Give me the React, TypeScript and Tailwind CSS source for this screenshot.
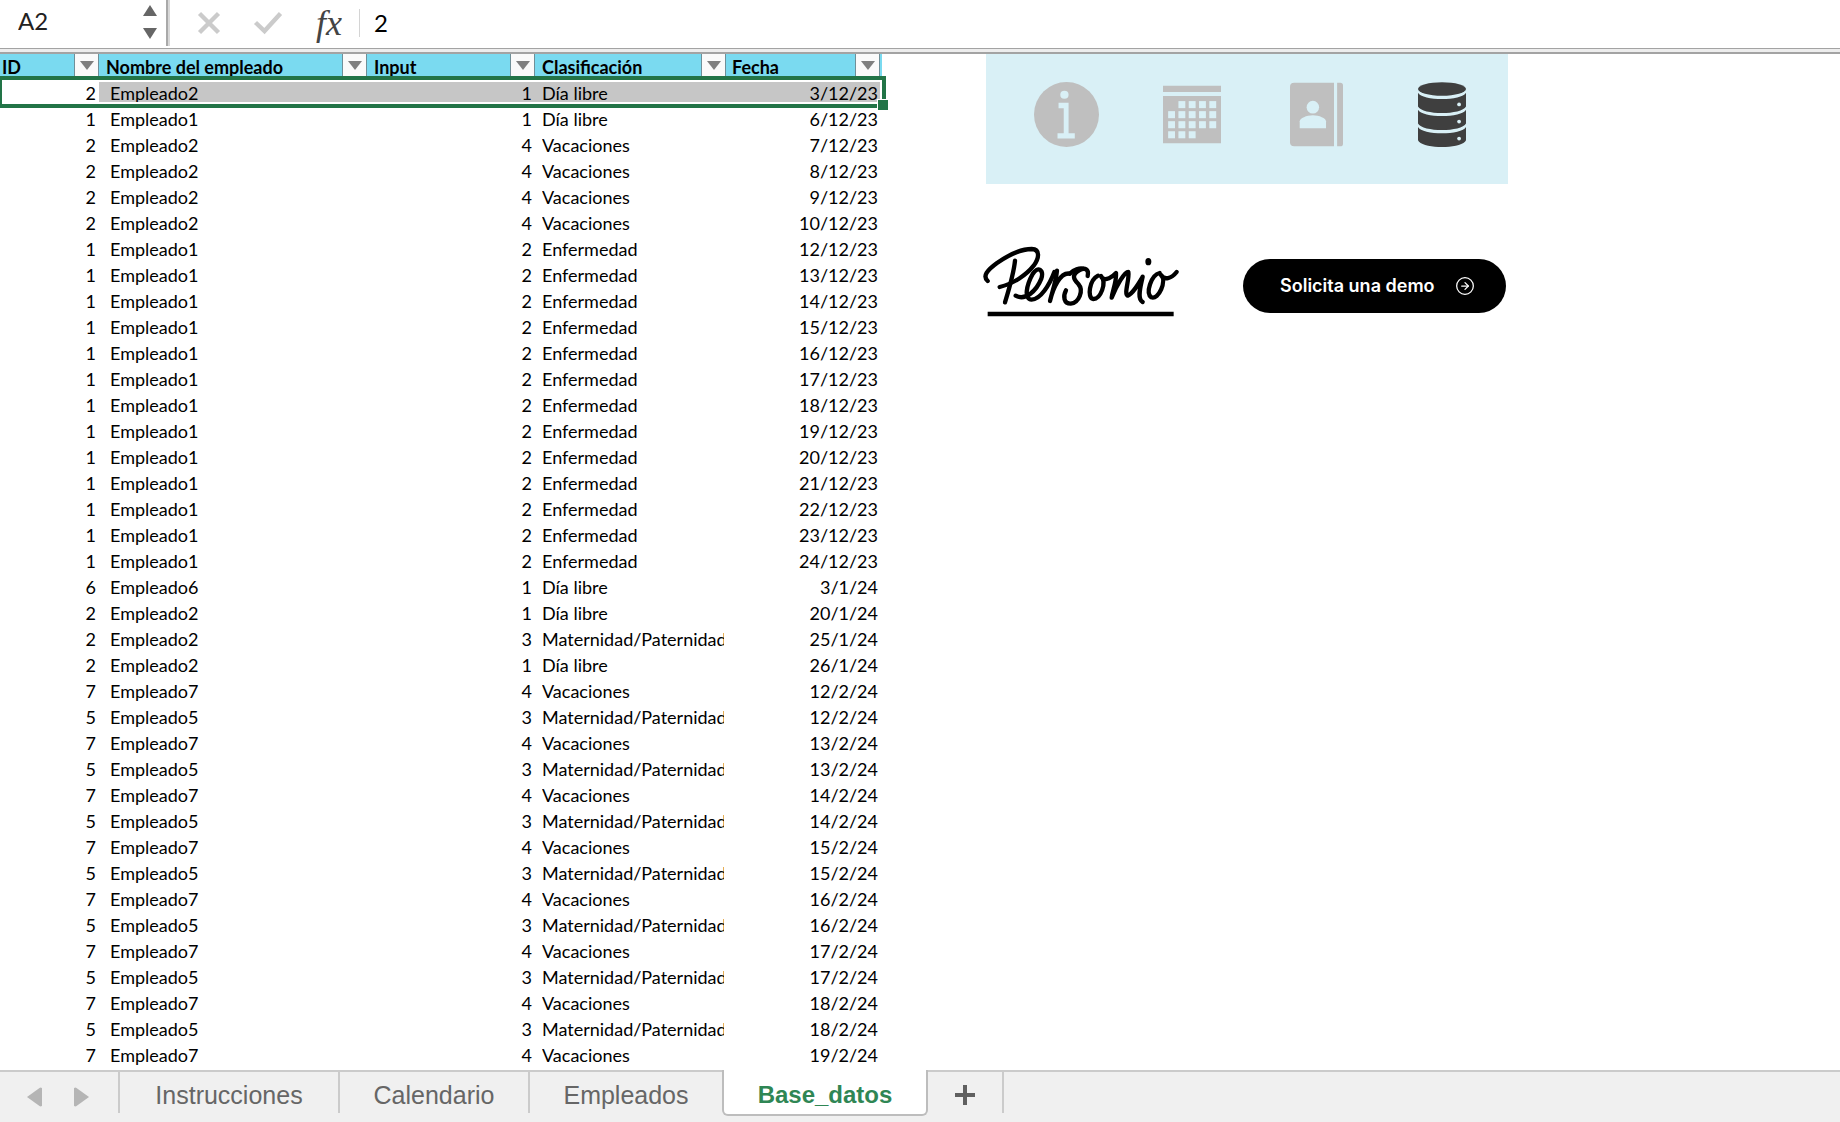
import { CircleArrowRight } from "lucide-react";

type Row = [id: number, input: number, date: string];

const KINDS: Record<number, string> = {
  1: "Día libre",
  2: "Enfermedad",
  3: "Maternidad/Paternidad",
  4: "Vacaciones",
};

const ROWS: Row[] = [
  [2, 1, "3/12/23"],
  [1, 1, "6/12/23"],
  [2, 4, "7/12/23"],
  [2, 4, "8/12/23"],
  [2, 4, "9/12/23"],
  [2, 4, "10/12/23"],
  [1, 2, "12/12/23"],
  [1, 2, "13/12/23"],
  [1, 2, "14/12/23"],
  [1, 2, "15/12/23"],
  [1, 2, "16/12/23"],
  [1, 2, "17/12/23"],
  [1, 2, "18/12/23"],
  [1, 2, "19/12/23"],
  [1, 2, "20/12/23"],
  [1, 2, "21/12/23"],
  [1, 2, "22/12/23"],
  [1, 2, "23/12/23"],
  [1, 2, "24/12/23"],
  [6, 1, "3/1/24"],
  [2, 1, "20/1/24"],
  [2, 3, "25/1/24"],
  [2, 1, "26/1/24"],
  [7, 4, "12/2/24"],
  [5, 3, "12/2/24"],
  [7, 4, "13/2/24"],
  [5, 3, "13/2/24"],
  [7, 4, "14/2/24"],
  [5, 3, "14/2/24"],
  [7, 4, "15/2/24"],
  [5, 3, "15/2/24"],
  [7, 4, "16/2/24"],
  [5, 3, "16/2/24"],
  [7, 4, "17/2/24"],
  [5, 3, "17/2/24"],
  [7, 4, "18/2/24"],
  [5, 3, "18/2/24"],
  [7, 4, "19/2/24"],
];

const COLUMNS = [
  { name: "ID", width: "w-[99px]", pad: "pl-[2px]" },
  { name: "Nombre del empleado", width: "w-[268px]", pad: "pl-[7px]" },
  { name: "Input", width: "w-[168px]", pad: "pl-[7px]" },
  { name: "Clasificación", width: "w-[191px]", pad: "pl-[7px]" },
  { name: "Fecha", width: "w-[156px]", pad: "pl-[6px] pr-[2px]" },
];

function FormulaBar() {
  return (
    <header className="flex h-12 shrink-0 items-center bg-white">
      <div className="flex h-[46px] w-[170px] items-center justify-between self-start border-r-2 border-[#d8d8d8] pl-[18px]">
        <input
          aria-label="Cuadro de nombres"
          defaultValue="A2"
          className="mb-1 w-24 bg-transparent text-2xl leading-7 text-[#222] outline-none"
        />
        <div className="flex h-full items-center border-r-2 border-[#a9a9a9] pr-[9px]">
          <div className="flex flex-col gap-3 pb-[2px]">
            <button aria-label="Anterior">
              <svg viewBox="0 0 14 11" className="block h-[11px] w-[14px] fill-[#666]">
                <path d="M7 0 14 11H0z" />
              </svg>
            </button>
            <button aria-label="Siguiente">
              <svg viewBox="0 0 14 11" className="block h-[11px] w-[14px] fill-[#666]">
                <path d="M0 0H14L7 11z" />
              </svg>
            </button>
          </div>
        </div>
      </div>
      <button aria-label="Cancelar" className="mb-[2px] ml-[27px]">
        <svg viewBox="0 0 24 24" className="block size-6 fill-none stroke-[#cbcbcb]" strokeWidth="4.4">
          <path d="M2.5 2.5 21.5 21.5M21.5 2.5 2.5 21.5" />
        </svg>
      </button>
      <button aria-label="Aceptar" className="mb-[2px] ml-8">
        <svg viewBox="0 0 30 24" className="block h-6 w-[30px] fill-none stroke-[#cbcbcb]" strokeWidth="4.4">
          <path d="M2.5 11.5 11.5 20 27.5 2.5" />
        </svg>
      </button>
      <button
        aria-label="Insertar función"
        className="mb-[2px] ml-7 w-9 font-['Liberation_Serif',serif] text-4xl leading-9 text-[#444] italic"
      >
        fx
      </button>
      <div className="mb-[2px] ml-3 h-7 w-px bg-[#d4d4d4]" />
      <input
        aria-label="Barra de fórmulas"
        defaultValue="2"
        className="mb-[2px] ml-[14px] min-w-0 flex-1 bg-transparent text-2xl leading-7 text-black outline-none"
      />
    </header>
  );
}

function DataTable() {
  return (
    <div className="relative w-[882px] shrink-0">
      <table className="w-full table-fixed border-separate border-spacing-0 text-lg leading-5 text-black">
        <thead>
          <tr>
            {COLUMNS.map((col) => (
              <th key={col.name} className={`${col.width} h-[26px] bg-[#7adaf0] p-0 text-left font-bold`}>
                <div className={`${col.pad} flex h-[26px] items-center justify-between whitespace-nowrap`}>
                  {col.name}
                  <button
                    aria-label={`Filtrar ${col.name}`}
                    className="flex h-full w-[25px] items-start justify-center border-x border-[#6f8f98] bg-[#fafafa] pt-[7px]"
                  >
                    <svg viewBox="0 0 14 9" className="block h-[9px] w-[14px] fill-[#7f7f7f]">
                      <path d="M0 0H14L7 9z" />
                    </svg>
                  </button>
                </div>
              </th>
            ))}
          </tr>
        </thead>
        <tbody>
          {ROWS.map(([id, input, date], i) => {
            const fill = i === 0 ? "bg-[#c6c6c6]" : "";
            return (
              <tr key={i} className="h-[26px]">
                <td className="p-0 pr-[3px] text-right">{id}</td>
                <td className={`${fill} p-0 pl-[11px]`}>Empleado{id}</td>
                <td className={`${fill} p-0 pr-[3px] text-right`}>{input}</td>
                <td className={`${fill} p-0 pl-[7px]`}>
                  <div className="mr-[2px] overflow-hidden whitespace-nowrap">{KINDS[input]}</div>
                </td>
                <td className={`${fill} p-0 pr-1 text-right`}>{date}</td>
              </tr>
            );
          })}
        </tbody>
      </table>

      {/* selected range and its fill handle */}
      <div className="pointer-events-none absolute top-[22px] left-0 h-8 w-[886px] border-4 border-l-2 border-[#227447] inset-ring-2 inset-ring-white">
        <div className="absolute -right-[7px] -bottom-[7px] size-3 border border-white bg-[#227447]" />
      </div>
    </div>
  );
}

function InfoIcon() {
  return (
    <svg viewBox="158 96 188 194" preserveAspectRatio="none" className="size-[65px]">
      <ellipse cx="252" cy="193" rx="94" ry="97" fill="#bfbfbf" />
      <g fill="#d9f0f6">
        <circle cx="246" cy="134" r="12" />
        <path d="M229 158H258V249H276V265H226V249H244V174H229z" />
      </g>
    </svg>
  );
}

function CalendarIcon() {
  const days = [
    [1, 2, 3, 4],
    [0, 1, 2, 3, 4],
    [0, 1, 2, 3, 4],
    [0, 1, 2],
  ];
  return (
    <svg viewBox="528 96 169 194" preserveAspectRatio="none" className="h-[65px] w-[58px]">
      <path d="M528 107H697V126H528zM528 138H697V279H528z" fill="#bfbfbf" />
      {days.map((cols, r) =>
        cols.map((c) => (
          <rect key={`${r}-${c}`} x={543 + c * 30} y={153 + r * 30} width="20" height="21" fill="#d9f0f6" />
        ))
      )}
    </svg>
  );
}

function ContactsIcon() {
  return (
    <svg viewBox="898 96 153 194" preserveAspectRatio="none" className="h-[65px] w-[53px]">
      <path d="M910 98H1025V288H910Q898 288 898 276V110Q898 98 910 98z" fill="#bfbfbf" />
      <path d="M1034 98H1043Q1051 98 1051 106V280Q1051 288 1043 288H1034z" fill="#bfbfbf" />
      <ellipse cx="964" cy="171" rx="18" ry="19" fill="#d9f0f6" />
      <path d="M926 234V213C926 204 946 195 964 195S1002 204 1002 213V234z" fill="#d9f0f6" />
    </svg>
  );
}

function DatabaseIcon() {
  return (
    <svg viewBox="1269 96 139 194" preserveAspectRatio="none" className="h-[65px] w-12">
      <g fill="#3f3f3f">
        <ellipse cx="1338.5" cy="117" rx="69.5" ry="20" />
        <path d="M1269 128C1281 153 1396 153 1408 128V169C1396 195 1281 195 1269 169z" />
        <path d="M1269 179C1281 204 1396 204 1408 179V220C1396 246 1281 246 1269 220z" />
        <path d="M1269 230C1281 255 1396 255 1408 230V270C1396 297 1281 297 1269 270z" />
      </g>
      <g fill="#d9f0f6">
        <circle cx="1388" cy="163" r="5.5" />
        <circle cx="1388" cy="214" r="5.5" />
        <circle cx="1388" cy="265" r="5.5" />
      </g>
    </svg>
  );
}

function PersonioLogo() {
  return (
    <svg
      viewBox="40 48 591 213"
      className="-ml-[3px] h-[71px] w-[197px]"
      fill="none"
      stroke="#000"
      strokeWidth="13"
      strokeLinecap="round"
      strokeLinejoin="round"
      role="img"
      aria-label="Personio"
    >
      <path d="M54 153C38 138 52 121 82 99C118 74 158 57 186 57C212 58 209 84 192 107C170 135 130 162 90 171" />
      <path d="M136 92C132 132 119 174 106 217" />
      <path d="M138 197C166 213 200 184 215 146C223 120 205 106 189 132C170 166 162 208 186 209C212 208 239 166 254 126" />
      <path d="M262 122C259 154 248 184 241 213C250 174 272 126 300 131" />
      <path d="M354 138C359 117 345 112 330 120C304 134 312 148 326 162C343 182 328 218 303 221C283 221 279 200 289 181" />
      <path d="M300 131C312 118 330 114 340 116" />
      <path d="M385 137C359 150 352 203 370 207C393 208 412 158 394 138C400 154 420 148 439 129C441 155 429 180 426 203C440 168 464 126 476 126C480 148 462 192 474 197C490 190 505 164 519 140C514 166 500 206 519 216" />
      <path d="M570 129C544 135 527 190 545 202C567 210 592 153 574 135C584 151 604 147 621 126" />
      <ellipse cx="536" cy="95" rx="9" ry="11" fill="#000" stroke="none" />
      <path d="M54 252H612" strokeWidth="14" strokeLinecap="butt" />
    </svg>
  );
}

function SidePanel() {
  return (
    <aside className="ml-[104px] w-[522px] shrink-0">
      <nav className="grid h-[130px] grid-cols-4 items-start justify-items-center bg-[#d9f0f6] pt-7 pr-1 pl-[18px]">
        <a href="#instrucciones" aria-label="Instrucciones">
          <InfoIcon />
        </a>
        <a href="#calendario" aria-label="Calendario">
          <CalendarIcon />
        </a>
        <a href="#empleados" aria-label="Empleados">
          <ContactsIcon />
        </a>
        <a href="#base-datos" aria-label="Base de datos">
          <DatabaseIcon />
        </a>
      </nav>
      <div className="mt-[62px] flex items-end justify-between pr-[2px]">
        <PersonioLogo />
        <a
          href="#demo"
          className="mb-1 flex h-[54px] w-[263px] items-center justify-between rounded-full bg-black pr-[31px] pl-[37px] font-['Inter',sans-serif] text-lg font-semibold text-white"
        >
          Solicita una demo
          <CircleArrowRight size={20} strokeWidth={1.5} />
        </a>
      </div>
    </aside>
  );
}

function SheetTabs() {
  return (
    <footer className="flex h-[52px] shrink-0 items-start bg-[#f0f0f0] font-['Liberation_Sans',Arial,sans-serif] text-[25px] leading-8 text-[#666]">
      <div className="flex h-full w-[118px] items-center gap-8 border-t-2 border-[#cbcbcb] pl-[27px]">
        <button aria-label="Hoja anterior">
          <svg viewBox="0 0 15 22" preserveAspectRatio="none" className="block h-5 w-[15px] fill-[#b5b5b5]">
            <path d="M15 1.5V20.5Q14 22 12.5 21L0 11 12.5 1Q14 0 15 1.5z" />
          </svg>
        </button>
        <button aria-label="Hoja siguiente">
          <svg viewBox="0 0 15 22" preserveAspectRatio="none" className="block h-5 w-[15px] fill-[#b5b5b5]">
            <path d="M0 1.5V20.5Q1 22 2.5 21L15 11 2.5 1Q1 0 0 1.5z" />
          </svg>
        </button>
      </div>
      <button className="h-[43px] w-[220px] border-t-2 border-l-2 border-[#cbcbcb] pt-1">Instrucciones</button>
      <button className="h-[43px] w-[190px] border-t-2 border-l-2 border-[#cbcbcb] pt-1">Calendario</button>
      <button className="h-[43px] w-[194px] border-t-2 border-l-2 border-[#cbcbcb] pt-1">Empleados</button>
      <button className="h-[46px] w-[206px] rounded-b-md border-x-2 border-b-2 border-[#bdbdbd] bg-white pt-[6px] text-2xl leading-8 font-bold text-[#2f8654]">
        Base_datos
      </button>
      <button
        aria-label="Nueva hoja"
        className="flex h-[43px] w-[76px] items-center justify-center border-t-2 border-r-2 border-[#cbcbcb] pt-[5px]"
      >
        <svg viewBox="0 0 20 20" className="size-5 fill-none stroke-[#606060]" strokeWidth="4">
          <path d="M10 0V20M0 10H20" />
        </svg>
      </button>
      <div className="h-full flex-1 border-t-2 border-[#cbcbcb]" />
    </footer>
  );
}

export default function App() {
  return (
    <div className="flex h-screen flex-col overflow-hidden bg-white font-['Lato',sans-serif]">
      <FormulaBar />
      <div className="h-[6px] shrink-0 border-t border-b-2 border-[#a3a3a3] bg-[#ededed]" />
      <main className="flex min-h-0 flex-1 items-start overflow-hidden">
        <DataTable />
        <SidePanel />
      </main>
      <SheetTabs />
    </div>
  );
}
